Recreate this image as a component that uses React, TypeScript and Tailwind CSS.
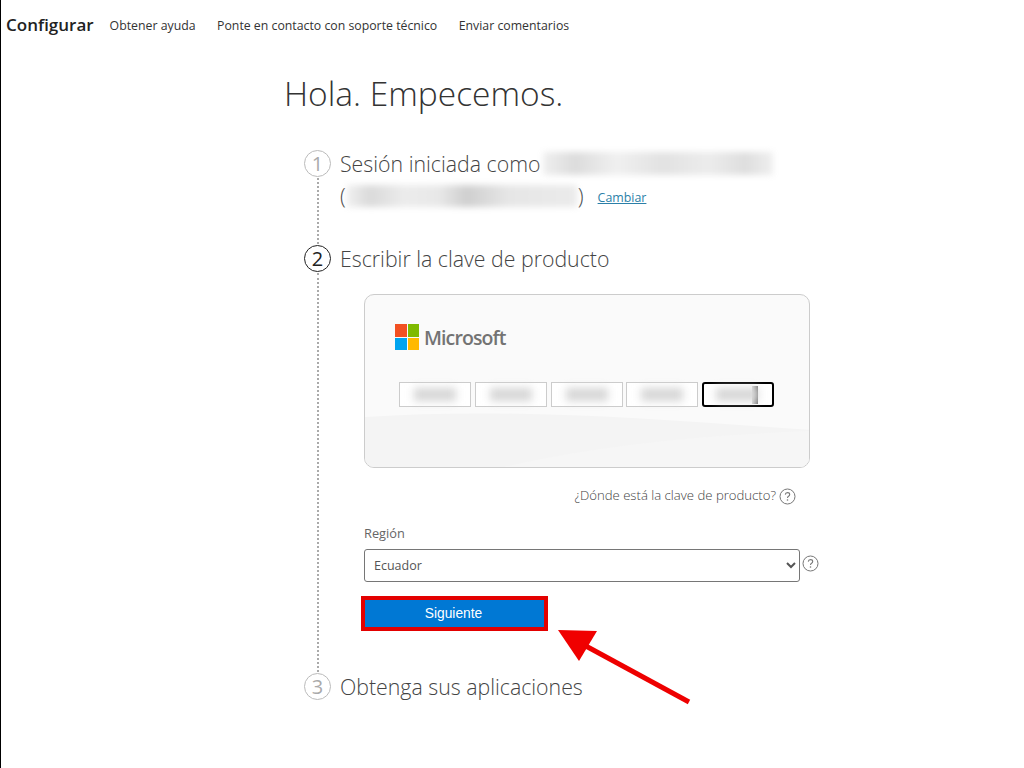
const sans = "font-['Open_Sans','Noto_Sans',sans-serif]";

function Circle({ n, dark }: { n: number; dark?: boolean }) {
  return (
    <div
      className={`w-[27px] h-[27px] shrink-0 rounded-full border-[1.5px] flex items-center justify-center text-[20px] font-normal leading-none ${
        dark ? "border-[#222] text-[#222]" : "border-[#bbb] text-[#aaa]"
      }`}
    >
      {n}
    </div>
  );
}

function Dots() {
  return <div className="flex-1 w-0 border-l-2 border-dotted border-[#aaa] my-px" />;
}

function Help() {
  return (
    <svg width="17" height="17" viewBox="0 0 17 17" fill="none" className="shrink-0">
      <circle cx="8.5" cy="8.5" r="7.5" stroke="#777" strokeWidth="1" />
      <path d="M6.3 6.6c.1-1.3 1-2 2.2-2 1.3 0 2.2.8 2.2 1.9 0 1.8-2.2 1.7-2.2 3.4" stroke="#777" strokeWidth="1.1" />
      <circle cx="8.5" cy="12" r=".8" fill="#777" />
    </svg>
  );
}

function KeyBox({ active, w = "w-[72px]" }: { active?: boolean; w?: string }) {
  return (
    <div
      className={`${w} h-[25px] bg-white flex items-center justify-center ${
        active ? "border-2 border-black rounded-[3px]" : "border border-[#ccc]"
      }`}
    >
      <div className="flex items-center h-[14px]">
        <div className="w-[42px] h-[13px] bg-[#d6d6d6] blur-[4px]" />
        {active && <div className="w-[6px] h-[18px] bg-gradient-to-r from-[#d6d6d6] to-[#777] -ml-[6px] mr-[2px]" />}
      </div>
    </div>
  );
}

export default function App() {
  return (
    <div className={`relative w-[1024px] h-[768px] overflow-hidden bg-white border-l border-black text-[#333] ${sans}`}>
      <header className="h-[50px] flex items-center pl-[5px]">
        <span className="text-[17px] font-semibold text-[#222] mr-[16px]">Configurar</span>
        <nav className="flex gap-[21.5px] mt-[2px] text-[12.3px] text-[#333]">
          <span>Obtener ayuda</span>
          <span>Ponte en contacto con soporte técnico</span>
          <span>Enviar comentarios</span>
        </nav>
      </header>

      <main className="ml-[284px] w-[560px]">
        <h1 className="mt-[18px] -ml-px h-[50px] text-[33.5px] leading-[50px] font-light text-[#333]">Hola. Empecemos.</h1>

        <div className="mt-[32px] ml-[19px] flex flex-col">
          {/* step 1 */}
          <section className="flex h-[95px]">
            <div className="w-[27px] flex flex-col items-center">
              <Circle n={1} />
              <Dots />
            </div>
            <div className="ml-[9px]">
              <div className="flex items-center h-[27px]">
                <span className="text-[21.3px] leading-[27px] font-light text-[#444]">Sesión iniciada como</span>
                <div className="ml-[3px] w-[230px] h-[23px] blur-[3px] bg-[linear-gradient(90deg,#efefef_0%,#dcdcdc_14%,#f0f0f0_32%,#e2e2e2_52%,#ececec_72%,#dedede_88%,#efefef_100%)]" />
              </div>
              <div className="flex items-center h-[28px] mt-[5px] text-[21.3px] font-light text-[#444]">
                <span>(</span>
                <div className="ml-[1px] w-[230px] h-[22px] blur-[3px] bg-[linear-gradient(90deg,#f0f0f0_0%,#dadada_10%,#ececec_25%,#e8e8e8_40%,#cfcfcf_52%,#e6e6e6_70%,#ebebeb_100%)]" />
                <span className="ml-px">)</span>
                <span className="ml-[14px] mt-[4px] text-[12.4px] font-normal text-[#2b7fa8] underline">Cambiar</span>
              </div>
            </div>
          </section>

          {/* step 2 */}
          <section className="flex h-[428px]">
            <div className="w-[27px] flex flex-col items-center">
              <Circle n={2} dark />
              <Dots />
            </div>
            <div className="ml-[9px]">
              <div className="h-[28px] text-[21.3px] leading-[28px] font-light text-[#444]">Escribir la clave de producto</div>

              <div className="relative overflow-hidden mt-[21px] ml-[24px] w-[446px] h-[174px] rounded-[10px] border border-[#ccc] bg-[#fafafa] pl-[30px] pt-[29px]">
                <svg className="absolute left-0 top-0" width="446" height="174" viewBox="0 0 446 174">
                  <path d="M0 122C150 112 300 125 446 135V174H0Z" fill="#f4f4f4" />
                  <path d="M130 174C230 150 340 140 446 136V174Z" fill="#f6f6f6" />
                </svg>
                <div className="relative flex items-center h-[26px]">
                  <div className="grid grid-cols-2 gap-px w-[24px] h-[26px]">
                    <div className="bg-[#f25022]" />
                    <div className="bg-[#7fba00]" />
                    <div className="bg-[#00a4ef]" />
                    <div className="bg-[#ffb900]" />
                  </div>
                  <span className="ml-[5px] mt-[2px] text-[19.5px] font-semibold text-[#737373] tracking-[-0.9px]">Microsoft</span>
                </div>
                <div className="relative mt-[32px] ml-[4px] flex gap-[4px]">
                  <KeyBox />
                  <KeyBox />
                  <KeyBox />
                  <KeyBox w="w-[72px] -ml-px" />
                  <KeyBox active />
                </div>
              </div>

              <div className="mt-[19px] ml-[24px] w-[432px] flex justify-end items-center gap-[3px] h-[18px] text-[13.15px] font-light text-[#444]">
                <span>¿Dónde está la clave de producto?</span>
                <Help />
              </div>

              <div className="mt-[19px] ml-[24px] h-[18px] text-[12.8px] leading-[18px] text-[#666]">Región</div>
              <div className="mt-[7px] ml-[24px] flex items-center gap-[2px]">
                <select
                  defaultValue="Ecuador"
                  className="w-[436px] h-[33px] pl-[5px] bg-white border border-[#767676] rounded-[3px] text-[12.5px] text-[#555]"
                >
                  <option>Ecuador</option>
                </select>
                <div className="-mt-[4px]">
                  <Help />
                </div>
              </div>

              <div className="mt-[14px] ml-[21px] w-[187px] h-[35px] pt-[1px] pr-[2px] border-[4px] border-[#e30000] bg-[#0078d4] flex items-center justify-center text-[13.8px] text-white font-['Liberation_Sans',sans-serif]">
                Siguiente
              </div>
            </div>
          </section>

          {/* step 3 */}
          <section className="flex">
            <div className="w-[27px]">
              <Circle n={3} />
            </div>
            <div className="ml-[9px] h-[28px] text-[21.3px] leading-[28px] font-light text-[#444]">Obtenga sus aplicaciones</div>
          </section>
        </div>
      </main>

      <svg className="absolute left-[-1px] top-0 pointer-events-none" width="1024" height="768" viewBox="0 0 1024 768">
        <polygon points="558,630 597,631 579,661" fill="#f00000" />
        <line x1="584" y1="645" x2="689" y2="702" stroke="#ee0000" strokeWidth="5" />
      </svg>
    </div>
  );
}
